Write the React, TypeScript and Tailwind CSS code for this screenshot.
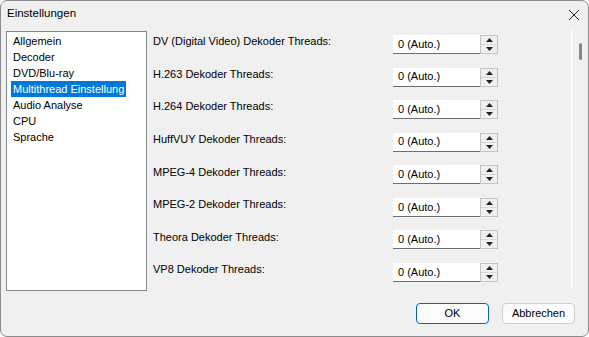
import React from "react";

const items = ["Allgemein", "Decoder", "DVD/Blu-ray", "Multithread Einstellung", "Audio Analyse", "CPU", "Sprache"];
const rows = [
  "DV (Digital Video) Dekoder Threads:",
  "H.263 Dekoder Threads:",
  "H.264 Dekoder Threads:",
  "HuffVUY Dekoder Threads:",
  "MPEG-4 Dekoder Threads:",
  "MPEG-2 Dekoder Threads:",
  "Theora Dekoder Threads:",
  "VP8 Dekoder Threads:",
];

function Spin() {
  return (
    <div className="flex h-[19px] w-[105px]">
      <div className="flex-1 bg-white border-b border-[#6e6e6e] flex items-center pl-[5px] text-[11px] text-black">0 (Auto.)</div>
      <div className="w-[18px] border border-[#c4c4c4] bg-[#f0f0f0] flex flex-col">
        <div className="flex-1 flex items-center justify-center border-b border-[#d8d8d8]">
          <svg width="7" height="4" viewBox="0 0 7 4"><path d="M0 4L3.5 0L7 4Z" fill="#222" /></svg>
        </div>
        <div className="flex-1 flex items-center justify-center">
          <svg width="7" height="4" viewBox="0 0 7 4"><path d="M0 0L3.5 4L7 0Z" fill="#222" /></svg>
        </div>
      </div>
    </div>
  );
}

export default function App() {
  return (
    <div className="w-[589px] h-[337px] bg-[#f0f0f0] border border-[#8c8c8c] rounded-t-[7px] rounded-b-[7px] overflow-hidden flex flex-col text-black" style={{ fontFamily: '"Liberation Sans", Arial, sans-serif' }}>
      <div className="h-[27px] flex items-center justify-between pl-[6px] pr-[8px]">
        <span className="text-[11.5px] -mt-[1px]">Einstellungen</span>
        <svg width="12" height="12" viewBox="0 0 12 12"><path d="M1 1L11 11M11 1L1 11" stroke="#222" strokeWidth="1" /></svg>
      </div>
      <div className="flex h-[258px] mt-[1px]">
        <div className="ml-[5px] mt-[2px] w-[141px] h-[260px] bg-white border border-[#828790] pt-[1px] pl-[4px] text-[11px] leading-[16px]">
          {items.map((it, i) => (
            <div key={it} className={i === 3 ? "bg-[#0078d7] text-white w-fit pl-[2px] pr-[2px]" : "px-[2px]"}>{it}</div>
          ))}
        </div>
        <div className="flex-1 flex flex-col pt-[6px] pl-[6px] w-[424px]">
          {rows.map((r) => (
            <div key={r} className="h-[32.57px] flex items-start shrink-0">
              <div className="w-[240px] text-[11px] -mt-[3px] h-[19px] flex items-center">{r}</div>
              <Spin />
            </div>
          ))}
        </div>
        <div className="w-px h-[258px] bg-white"></div>
        <div className="w-[16px] flex justify-center pt-[14px]">
          <div className="w-[3px] h-[17px] rounded bg-[#868686] ml-[1px]"></div>
        </div>
      </div>
      <div className="flex justify-end gap-[13px] pr-[13px] mt-[16px]">
        <button className="w-[73px] h-[21px] rounded-[4px] border border-[#0067c0] bg-[#fbfbfb] text-[11px]">OK</button>
        <button className="w-[73px] h-[21px] rounded-[4px] border border-[#cfcfcf] bg-[#fbfbfb] text-[11px]">Abbrechen</button>
      </div>
    </div>
  );
}
